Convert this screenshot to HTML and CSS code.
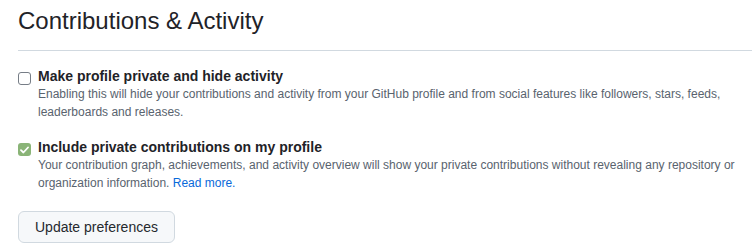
FILE: index.html
```html
<!DOCTYPE html>
<html lang="en">
<head>
<meta charset="utf-8">
<title>Contributions & Activity</title>
<link rel="stylesheet" href="styles.css">
</head>
<body>
<div class="page">
  <div class="subhead">
    <h2 class="subhead-title">Contributions &amp; Activity</h2>
  </div>
  <div class="option">
    <span class="checkbox"></span>
    <div class="option-body">
      <div class="option-title">Make profile private and hide activity</div>
      <p class="note">Enabling this will hide your contributions and activity from your GitHub profile and from social features like followers, stars, feeds, leaderboards and releases.</p>
    </div>
  </div>
  <div class="option option-second">
    <span class="checkbox checked">
      <svg width="9" height="8" viewBox="0 0 9 8" aria-hidden="true"><path d="M1 4.2 L3.4 6.5 L8 1.5" fill="none" stroke="#fff" stroke-width="1.8" stroke-linecap="round" stroke-linejoin="round"/></svg>
    </span>
    <div class="option-body">
      <div class="option-title">Include private contributions on my profile</div>
      <p class="note">Your contribution graph, achievements, and activity overview will show your private contributions without revealing any repository or organization information. <a href="#" class="link">Read more.</a></p>
    </div>
  </div>
  <button class="btn" type="button">Update preferences</button>
</div>
</body>
</html>
```
FILE: styles.css
```css
html, body {
  margin: 0;
  padding: 0;
  background: #ffffff;
}
body {
  font-family: "Liberation Sans", Arial, sans-serif;
  color: #1f2328;
}
.page {
  padding: 6px 0 0 18px;
}
.subhead {
  border-bottom: 1px solid #d1d9e0;
  padding-bottom: 14px;
}
.subhead-title {
  margin: 0;
  font-size: 24px;
  font-weight: 400;
  line-height: 30px;
}
.option {
  display: flex;
  gap: 7px;
  margin-top: 16px;
}
.option-second {
  margin-top: 17px;
}
.checkbox {
  flex: none;
  width: 13px;
  height: 13px;
  margin-top: 5px;
  box-sizing: border-box;
  border: 1.5px solid #767d86;
  border-radius: 3px;
  display: flex;
  align-items: center;
  justify-content: center;
}
.checkbox.checked {
  border: none;
  background: #8ab477;
  border-radius: 3px;
}
.option-title {
  font-size: 14px;
  font-weight: 700;
  line-height: 18px;
}
.note {
  margin: 0;
  font-size: 12px;
  line-height: 18px;
  color: #59636e;
}
.link {
  color: #0969da;
  text-decoration: none;
}
.btn {
  margin-top: 19px;
  height: 32px;
  padding: 0 16px;
  font-family: "Liberation Sans", Arial, sans-serif;
  font-size: 14px;
  color: #25292e;
  background: #f6f8fa;
  border: 1px solid #d1d9e0;
  border-radius: 6px;
  cursor: pointer;
}
```
